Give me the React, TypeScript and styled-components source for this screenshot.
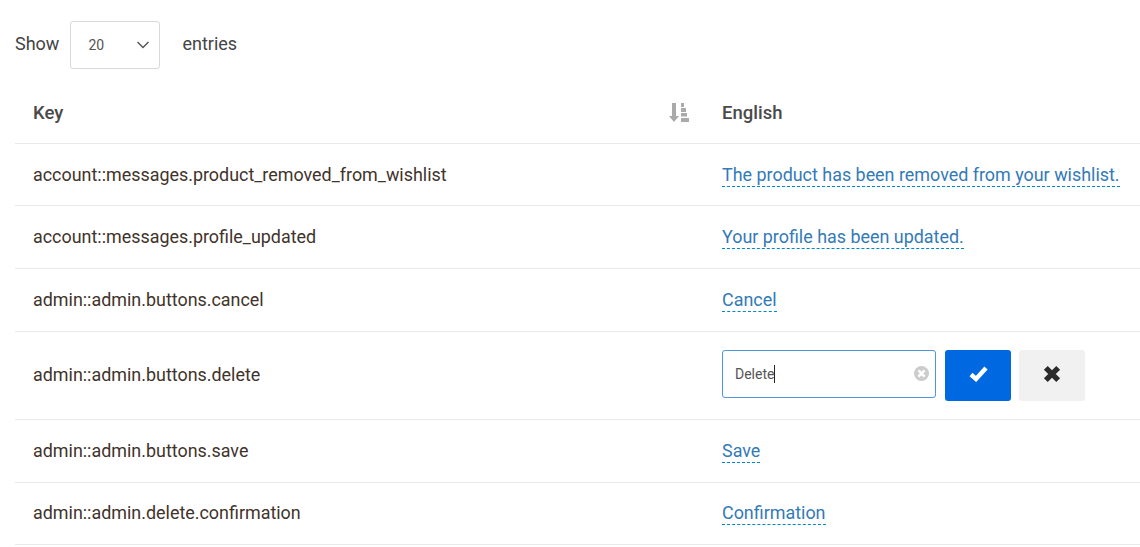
import React from "react";
import styled, { createGlobalStyle } from "styled-components";

const Global = createGlobalStyle`
  html, body { margin: 0; padding: 0; background: #fff; overflow: hidden; }
  body { font-family: Roboto, "Liberation Sans", sans-serif; color: #333; }
`;
const Page = styled.div`
  width: 1140px;
  height: 547px;
  padding: 21px 0 0 15px;
  box-sizing: border-box;
  overflow: hidden;
`;
const Toolbar = styled.div`
  display: flex;
  align-items: center;
  height: 48px;
  font-size: 18px;
  color: #444;
`;
const ToolbarLabel = styled.span`
  padding-bottom: 4px;
`;
const SelectBox = styled.div`
  width: 90px;
  height: 48px;
  box-sizing: border-box;
  margin: 0 22px 0 11px;
  border: 1px solid #d9d9d9;
  border-radius: 3px;
  display: flex;
  align-items: center;
  justify-content: space-between;
  padding: 0 9px 0 17px;
  font-size: 14px;
  color: #555;
`;
const Table = styled.div`
  width: 1125px;
  margin-top: 13px;
`;
const Row = styled.div<{ $h: number }>`
  display: grid;
  grid-template-columns: 689px 1fr;
  height: ${(p) => p.$h}px;
  box-sizing: border-box;
  border-bottom: 1px solid #e9e9e9;
  align-items: center;
  &:nth-child(2) {
    padding-top: 1px;
  }
  &:last-child {
    padding-bottom: 1px;
  }
`;
const KeyCell = styled.div`
  padding: 0 0 2px 18px;
  font-size: 17.92px;
  color: #3f332b;
`;
const ValueCell = styled.div`
  padding-left: 18px;
  font-size: 17.92px;
  display: flex;
  align-items: center;
`;
const ActionCell = styled(ValueCell)`
  align-items: flex-start;
  padding-bottom: 1px;
`;
const HeadKey = styled.div`
  padding: 0 15px 0 18px;
  display: flex;
  justify-content: space-between;
  align-items: center;
  font-size: 18.5px;
  font-weight: 500;
  color: #4a4a4a;
`;
const HeadValue = styled.div`
  padding-left: 18px;
  font-size: 18.5px;
  font-weight: 500;
  color: #4a4a4a;
`;
const SortIcon = styled.svg`
  display: block;
  width: 20px;
  height: 19px;
  fill: #aaa;
`;
const Editable = styled.a`
  color: #337ab7;
  border-bottom: 1px dashed #0088cc;
  line-height: 21px;
  margin-top: 1px;
  padding-bottom: 1px;
`;
const InputBox = styled.div`
  width: 214px;
  height: 48px;
  box-sizing: border-box;
  border: 1px solid #4f94dc;
  border-radius: 3px;
  display: flex;
  align-items: center;
  justify-content: space-between;
  padding: 0 6px 0 12px;
  font-size: 14px;
  color: #555;
`;
const Typed = styled.span`
  border-right: 1px solid #222;
  line-height: 18px;
`;
const ClearIcon = styled.span`
  width: 15px;
  height: 15px;
  border-radius: 50%;
  background: #ccc;
  display: flex;
  align-items: center;
  justify-content: center;
`;
const ActionButton = styled.button<{ $primary?: boolean }>`
  width: 66px;
  height: 51px;
  margin-left: ${(p) => (p.$primary ? 9 : 8)}px;
  border: 0;
  padding: 0 0 2px;
  border-radius: 3px;
  background: ${(p) => (p.$primary ? "#0068e1" : "#f1f1f1")};
  color: ${(p) => (p.$primary ? "#fff" : "#2b2b2b")};
  display: flex;
  align-items: center;
  justify-content: center;
`;
const Chevron = () => (
  <svg width="14" height="8" viewBox="0 0 14 8" fill="none" stroke="#555" strokeWidth="1.4">
    <path d="M1.5 1 L7 6.5 L12.5 1" />
  </svg>
);
const Sort = () => (
  <SortIcon viewBox="0 0 20 19">
    <path d="M3 0h4v13h3l-5 6-5-6h3z" />
    <rect x="12" y="0" width="3" height="4" />
    <rect x="12" y="5" width="5" height="4" />
    <rect x="12" y="10" width="6" height="3.5" />
    <rect x="12" y="15" width="8" height="4" />
  </SortIcon>
);
const Check = () => (
  <svg width="19" height="16" viewBox="0 0 18 16" fill="none" stroke="currentColor" strokeWidth="4.4">
    <path d="M1.5 8.5 L6.5 13 L16.5 2" />
  </svg>
);
const Cross = () => (
  <svg width="18" height="18" viewBox="0 0 16 16" fill="none" stroke="currentColor" strokeWidth="4.8">
    <path d="M2.5 2.5 L13.5 13.5 M13.5 2.5 L2.5 13.5" />
  </svg>
);
const rows = [
  ["account::messages.product_removed_from_wishlist", "The product has been removed from your wishlist.", 62],
  ["account::messages.profile_updated", "Your profile has been updated.", 63],
  ["admin::admin.buttons.cancel", "Cancel", 63],
] as const;
const rows2 = [
  ["admin::admin.buttons.save", "Save", 63],
  ["admin::admin.delete.confirmation", "Confirmation", 62],
] as const;
export default function App() {
  return (
    <Page>
      <Global />
      <Toolbar>
        <ToolbarLabel>Show</ToolbarLabel>
        <SelectBox>
          20
          <Chevron />
        </SelectBox>
        <ToolbarLabel>entries</ToolbarLabel>
      </Toolbar>
      <Table>
        <Row $h={62}>
          <HeadKey>
            Key
            <Sort />
          </HeadKey>
          <HeadValue>English</HeadValue>
        </Row>
        {rows.map(([k, v, h]) => (
          <Row key={k} $h={h}>
            <KeyCell>{k}</KeyCell>
            <ValueCell><Editable>{v}</Editable></ValueCell>
          </Row>
        ))}
        <Row $h={88}>
          <KeyCell>admin::admin.buttons.delete</KeyCell>
          <ActionCell>
            <InputBox>
              <Typed>Delete</Typed>
              <ClearIcon><svg width="9" height="9" viewBox="0 0 16 16" fill="none" stroke="#fff" strokeWidth="4.5"><path d="M2.5 2.5 L13.5 13.5 M13.5 2.5 L2.5 13.5" /></svg></ClearIcon>
            </InputBox>
            <ActionButton $primary><Check /></ActionButton>
            <ActionButton><Cross /></ActionButton>
          </ActionCell>
        </Row>
        {rows2.map(([k, v, h]) => (
          <Row key={k} $h={h}>
            <KeyCell>{k}</KeyCell>
            <ValueCell><Editable>{v}</Editable></ValueCell>
          </Row>
        ))}
      </Table>
    </Page>
  );
}
